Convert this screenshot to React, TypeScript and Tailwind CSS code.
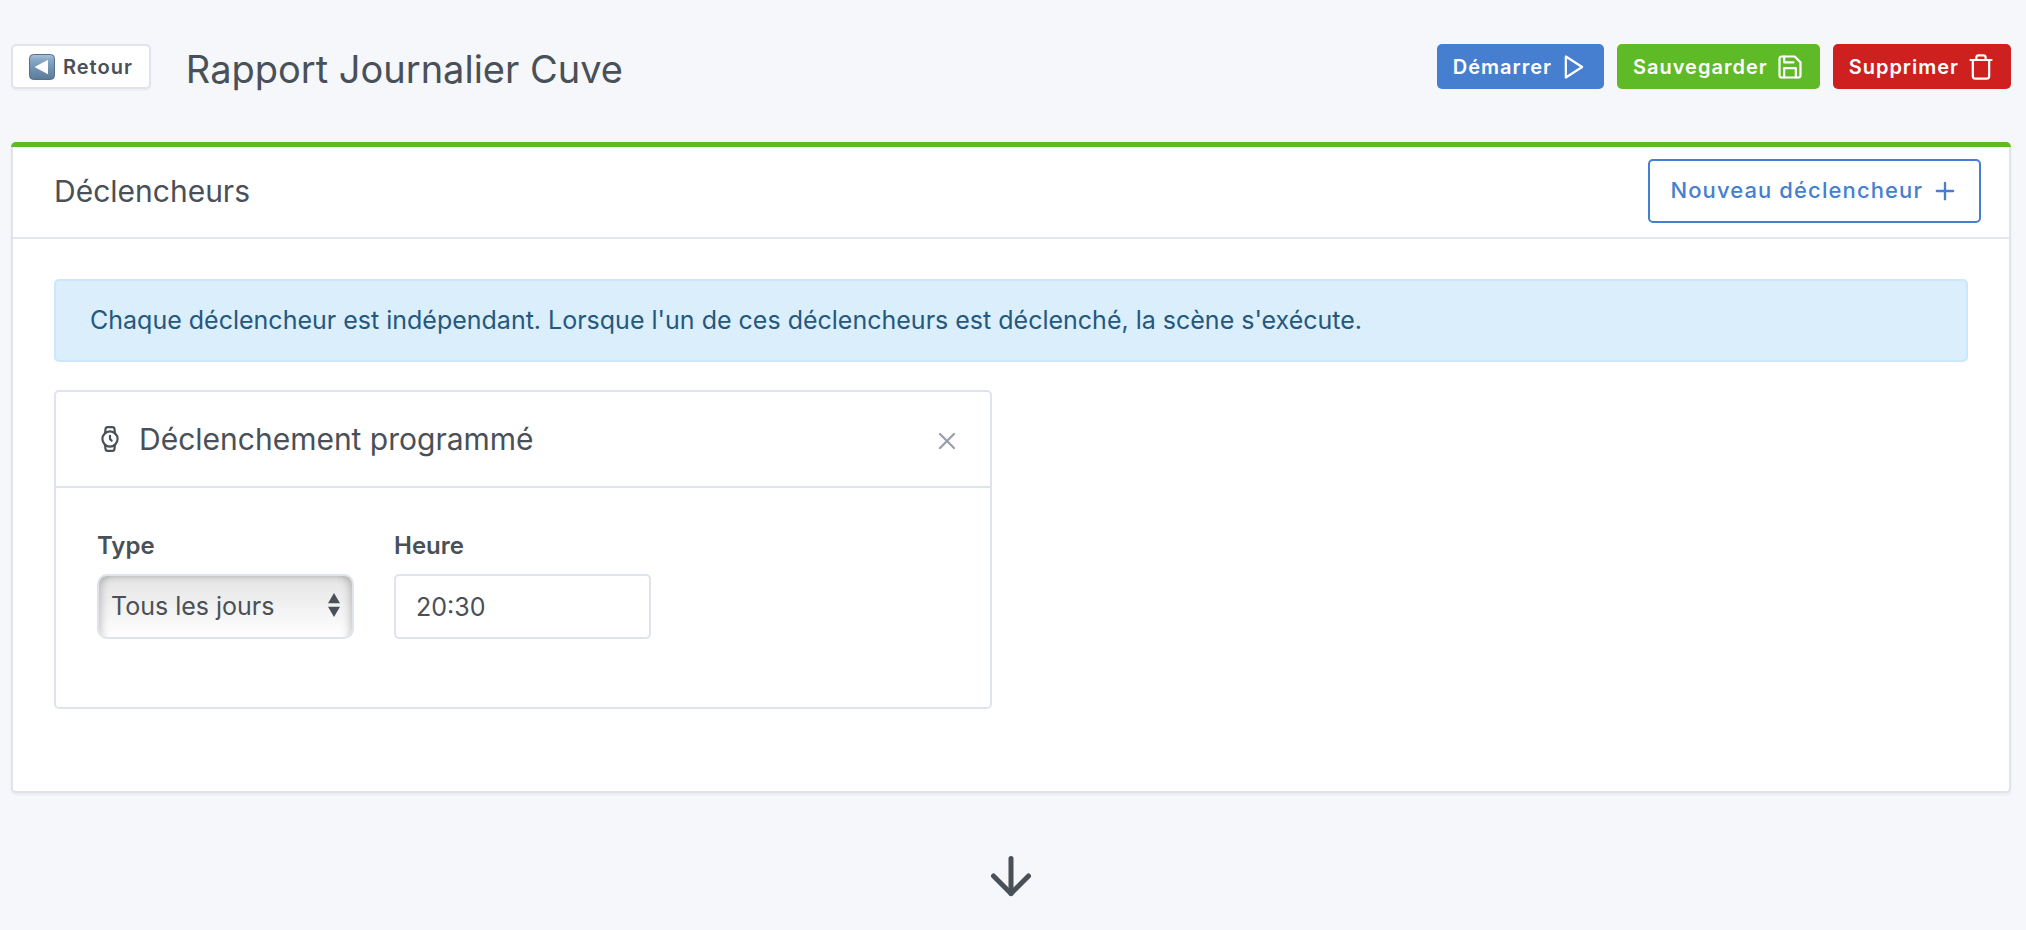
import { FiArrowDown, FiPlay, FiPlus, FiSave, FiTrash, FiWatch, FiX } from "react-icons/fi";

function BackIcon() {
  return (
    <svg viewBox="0 0 26 26" className="h-[26px] w-[26px]" aria-hidden="true">
      <defs>
        <linearGradient id="back-fill" x1="0" y1="0" x2="0" y2="1">
          <stop offset="0" stopColor="#a9c3da" />
          <stop offset="0.2" stopColor="#89a9c8" />
          <stop offset="0.5" stopColor="#7396b5" />
          <stop offset="1" stopColor="#5b7a96" />
        </linearGradient>
      </defs>
      <rect x="0.5" y="0.5" width="25" height="25" rx="4" fill="url(#back-fill)" stroke="#54708a" />
      <path d="M5.5 13 L19 5.7 V20.3 Z" fill="#fff" />
    </svg>
  );
}

const actionButton =
  "flex h-[45px] items-center gap-2 rounded-[5px] px-4 text-[20px] font-semibold tracking-wider text-white";

export default function App() {
  return (
    <div className="min-h-screen bg-[#f5f7fb] pl-[11px] pr-[15px] pt-11 font-['Inter','Liberation_Sans',sans-serif] text-[#495057]">
      <header className="flex items-start justify-between">
        <div className="flex items-start gap-[35px]">
          <button className="flex h-[45px] items-center gap-2 rounded-[5px] border-2 border-[#dfe4ec] bg-white px-4 text-[20px] font-semibold tracking-wider shadow-[0_2px_0_rgba(0,0,0,0.03)]">
            <BackIcon />
            Retour
          </button>
          <h1 className="text-[38px] leading-[50px]">Rapport Journalier Cuve</h1>
        </div>
        <div className="flex gap-[13px]">
          <button className={`${actionButton} bg-[#467fcf]`}>
            Démarrer
            <FiPlay size={28} strokeWidth={1.9} />
          </button>
          <button className={`${actionButton} bg-[#5eba27]`}>
            Sauvegarder
            <FiSave size={28} strokeWidth={1.9} />
          </button>
          <button className={`${actionButton} bg-[#cd201f]`}>
            Supprimer
            <FiTrash size={28} strokeWidth={1.9} />
          </button>
        </div>
      </header>

      <main>
        <section className="mt-12 rounded-[5px] border-x-2 border-b-2 border-[#dfe4ec] bg-white shadow-[0_2px_3px_rgba(0,0,0,0.05)]">
          <div className="-mx-0.5 h-[5px] rounded-t-[5px] bg-[#5eba27]" />
          <div className="flex h-[92px] items-center justify-between border-b-2 border-[#e4e8ed] pb-[3px] pl-[41px] pr-7">
            <h2 className="text-[30px] leading-9">Déclencheurs</h2>
            <button className="flex h-16 items-center gap-2 rounded-[5px] border-2 border-[#467fcf] px-5 text-[22px] font-medium tracking-wider text-[#467fcf]">
              Nouveau déclencheur
              <FiPlus size={28} />
            </button>
          </div>
          <div className="px-[41px] pb-[82px] pt-10">
            <p className="rounded-[5px] border-2 border-[#cbe7f9] bg-[#daeefc] px-[34px] py-5 text-[25px] leading-[39px] text-[#24587e]">
              Chaque déclencheur est indépendant. Lorsque l'un de ces déclencheurs est déclenché, la scène s'exécute.
            </p>
            <article className="mt-7 w-[49%] rounded-[5px] border-2 border-[#dfe4ec]">
              <div className="flex h-[96px] items-center justify-between border-b-2 border-[#dfe4ec] pl-[41px] pr-[29px]">
                <h3 className="flex items-center gap-4 text-[30px] leading-9">
                  <FiWatch size={26} />
                  Déclenchement programmé
                </h3>
                <button aria-label="Fermer" className="pt-1 text-[#9aa0ac]">
                  <FiX size={28} />
                </button>
              </div>
              <div className="flex gap-10 px-[41px] pb-[68px] pt-10">
                <div className="flex w-[257px] flex-col gap-2.5">
                  <label htmlFor="type" className="text-[24px] font-semibold leading-9">
                    Type
                  </label>
                  <div className="relative">
                    <select
                      id="type"
                      className="h-[65px] w-full appearance-none rounded-[10px] border-2 border-[#dfe4ec] bg-linear-to-b from-[#e4e4e4] to-white pl-3 text-[25px] shadow-[inset_8px_4px_8px_-6px_rgba(0,0,0,0.22),inset_-8px_4px_8px_-6px_rgba(0,0,0,0.22)]"
                    >
                      <option>Tous les jours</option>
                    </select>
                    <svg viewBox="0 0 12 26" preserveAspectRatio="none" className="pointer-events-none absolute right-3.5 top-[19px] h-6 w-3" aria-hidden="true">
                      <path d="M6 0 L12 11 H0 Z M0 15 H12 L6 26 Z" fill="#495057" />
                    </svg>
                  </div>
                </div>
                <div className="flex w-[257px] flex-col gap-2.5">
                  <label htmlFor="time" className="text-[24px] font-semibold leading-9">
                    Heure
                  </label>
                  <input
                    id="time"
                    type="text"
                    defaultValue="20:30"
                    className="h-[65px] w-full rounded-[5px] border-2 border-[#dfe4ec] bg-white px-5 text-[25px]"
                  />
                </div>
              </div>
            </article>
          </div>
        </section>
        <div className="mt-[53px] flex justify-center">
          <FiArrowDown size={60} />
        </div>
      </main>
    </div>
  );
}
